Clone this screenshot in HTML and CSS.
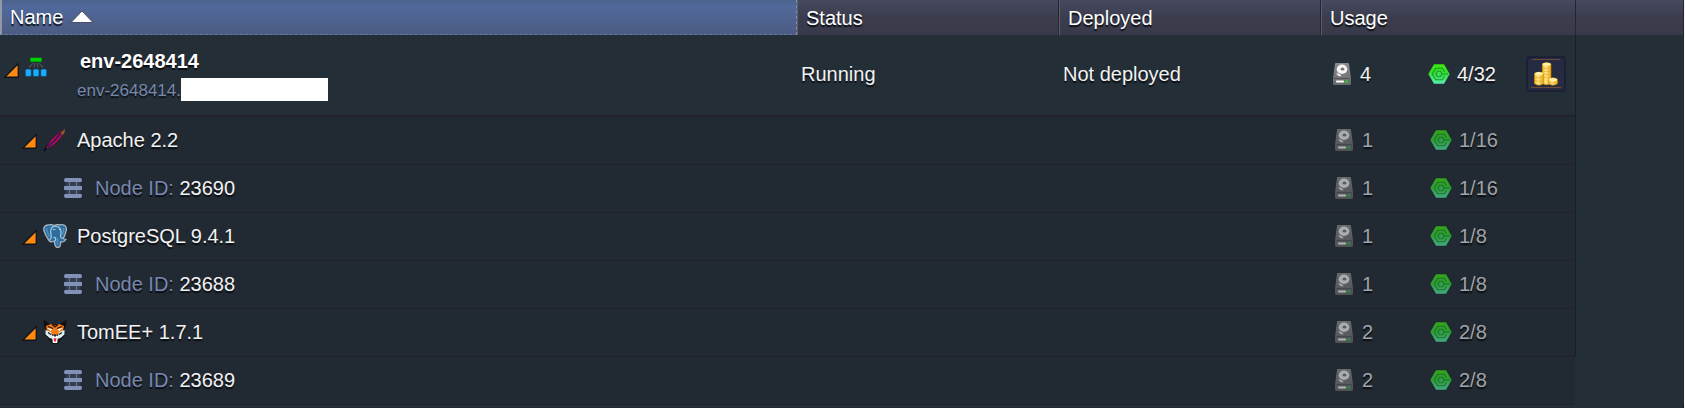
FILE: index.html
```html
<!DOCTYPE html>
<html lang="en">
<head>
<meta charset="utf-8">
<title>Environments</title>
<link rel="stylesheet" href="styles.css">
</head>
<body>
<svg class="sprite" width="0" height="0" aria-hidden="true">
  <defs>
    <linearGradient id="hexFill" x1="0" y1="0" x2="0" y2="1"><stop offset="0" stop-color="#3de80c"/><stop offset=".45" stop-color="#35dc2c"/><stop offset="1" stop-color="#58eeb4"/></linearGradient>
    <linearGradient id="diskBody" x1="0" y1="0" x2="0" y2="1"><stop offset="0" stop-color="#8c8c8e"/><stop offset="1" stop-color="#68686b"/></linearGradient>
    <linearGradient id="gold" x1="0" y1="0" x2="1" y2="0"><stop offset="0" stop-color="#f5b921"/><stop offset=".4" stop-color="#ffe98a"/><stop offset="1" stop-color="#e9a10d"/></linearGradient>
    <symbol id="toggle" viewBox="0 0 16 16"><path d="M15.200 .8V15.200H.8Z" fill="#ff8a0c" stroke="#10131f" stroke-width="1.400" stroke-linejoin="round"/></symbol>
    <symbol id="disk" viewBox="0 0 18 22">
      <path d="M2 1Q2 0 3 0H15Q16 0 16 1L18 15V20.500Q18 22 16.500 22H1.500Q0 22 0 20.500V15Z" fill="url(#diskBody)"/>
      <path d="M.5 15.500H17.500" stroke="#55565a"/>
      <ellipse cx="9" cy="6.200" rx="5.300" ry="4.700" fill="#f4f4f4"/>
      <ellipse cx="9.500" cy="6" rx="2" ry="1.500" fill="#77777a"/>
      <path d="M3 9.500Q8 10 9 13.500H6Q3 12 3 9.500Z" fill="#f4f4f4" stroke="#77777a" stroke-width=".7"/>
      <rect x="3" y="17.500" width="8" height="2" rx=".7" fill="#fff"/>
      <rect x="12" y="17.500" width="3.200" height="2" rx=".6" fill="#18d52c"/>
    </symbol>
    <symbol id="cloudlet" viewBox="0 0 22 20">
      <path d="M6 .3H16L21.700 10L16 19.700H6L.3 10Z" fill="url(#hexFill)"/>
      <path d="M16.500 7.800L14.300 4.200H7.700L4.300 10L7.700 15.800H14.300L16.500 12.200M14 10H20" fill="none" stroke="#159a2c" stroke-width="1.100"/>
      <path d="M9.500 7.300H12.500L14 10L12.500 12.700H9.500L8 10Z" fill="#3fdc58" stroke="#159a2c" stroke-width="1.100"/>
    </symbol>
    <symbol id="node" viewBox="0 0 18 20">
      <path d="M1.500 3H16.500V17H1.500Z" fill="#343e50"/>
      <path d="M5.500 4V16M12.500 4V16" stroke="#64728f" stroke-width="1.200"/>
      <g fill="#8092b7"><path d="M2 0H16Q18 0 18 2V3L17 4H1L0 3V2Q0 0 2 0Z"/><rect y="8" width="18" height="4" rx=".5"/><path d="M1 16H17L18 17V18Q18 20 16 20H2Q0 20 0 18V17Z"/></g>
    </symbol>
    <symbol id="topology" viewBox="0 0 22 20">
      <path d="M8 6L4 10.500M10 6L9 10.500M12 6L13 10.500M14 6L18 10.500" stroke="#4b5054" stroke-width="1.300"/>
      <rect x="5" y=".5" width="12" height="4.500" rx="1" fill="#00d000" stroke="#123c22" stroke-width=".6"/>
      <g fill="#16adff" stroke="#12395d" stroke-width=".6"><rect x=".3" y="12" width="6" height="7.500" rx="1.500"/><rect x="8" y="12" width="6" height="7.500" rx="1.500"/><rect x="15.700" y="12" width="6" height="7.500" rx="1.500"/></g>
    </symbol>
    <symbol id="apache" viewBox="0 0 24 24">
      <path d="M1 23L5 17" stroke="#0b0d1c" stroke-width="2"/>
      <path d="M3.500 19.500Q6 13 12 8Q17 3 21 2Q21 7 16 12Q11 18 4.500 20.500Z" fill="#c4103f" stroke="#3a1035" stroke-width=".8"/>
      <path d="M5 18.500Q12 13 18 5" fill="none" stroke="#45146b" stroke-width="2.200"/>
      <path d="M18 5L22 .5L21.500 5L19.500 7Z" fill="#806323"/>
    </symbol>
    <symbol id="postgres" viewBox="0 0 24 24">
      <path d="M5 1Q8 0 11 1.500Q14 .2 17 .8Q24 0 23.300 6Q22 12 20 14.500L23 15.500Q21 18.500 17.500 18Q18 23.500 14.500 23.500Q11.500 23 11.500 17Q8 19 6 16.500Q2 11 .8 6Q.4 1.500 5 1Z" fill="#2f6c9e" stroke="#a5b3bb" stroke-width="1.300"/>
      <path d="M9.500 3Q7 5 8 11Q9 15 6.500 15.500M15 2.500Q18.500 5 18 10Q16.500 13.500 19.500 14.500M10 5.500H12.500M16 5.500H18M12.500 17Q13.500 13 10.500 13.500M9.500 3Q12 1.500 14.500 3" fill="none" stroke="#a9cbdf" stroke-width="1.200"/>
      <path d="M3.500 4Q4 9 6.500 13M20.500 4Q21 7 19.500 10.500M14.500 14V21" fill="none" stroke="#4c8ec2" stroke-width="1.500"/>
    </symbol>
    <symbol id="tomee" viewBox="0 0 24 24">
      <path d="M.8 0L7 4H17L23.200 0Q24 5 21.500 9L22.500 15L18 19.500L14.500 24H9.500L6 19.500L1.500 15L2.500 9Q0 5 .8 0Z" fill="#101114"/>
      <path d="M3 6L8 4L12 5.500L16 4L21 6L20 11L12 16L4 11Z" fill="#f47b16"/>
      <path d="M2.500 10L8 12L10 19L6.500 18L2.500 14.500ZM21.500 10L16 12L14 19L17.500 18L21.500 14.500Z" fill="#d8eff5"/>
      <path d="M4 8L9.500 9L8 11ZM20 8L14.500 9L16 11Z" fill="#fff"/>
      <path d="M9 4.500L12 7L15 4.500M5 6.500L10 8.500M19 6.500L14 8.500M5 12.500L8 14.500M19 12.500L16 14.500" fill="none" stroke="#2b1410" stroke-width="1.200"/>
      <path d="M9 16L12 14.500L15 16L14.200 23H9.800Z" fill="#fff"/>
      <path d="M10 15L12 14L14 15L12 17Z" fill="#24252a"/>
      <path d="M10.500 18.300H13.500L13 21.500H11Z" fill="#e72836"/>
    </symbol>
    <symbol id="coins" viewBox="0 0 24 24">
      <g fill="url(#gold)" stroke="#d08a0c" stroke-width=".5"><path d="M8.300 1.800Q12.700-1 17 1.800V21.500Q12.700 24 8.300 21.500Z"/><path d="M.4 11.500Q5 8.500 9.600 11.500V21.500Q5 25 .4 21.500Z"/><path d="M14.500 17.500Q19 14 23.600 17.500V21.500Q19 25 14.500 21.500Z"/></g>
      <ellipse cx="12.600" cy="2.200" rx="4" ry="1.500" fill="#fff2a7"/><ellipse cx="5" cy="11.600" rx="4.200" ry="1.700" fill="#fff2a7"/><ellipse cx="19" cy="17.500" rx="4.100" ry="1.600" fill="#fff2a7"/>
      <path d="M9 6Q12.500 7.500 16.300 6M9 9Q12.500 10.500 16.300 9M10 12Q12.500 13.500 16.300 12M10 15Q12.500 16.500 16 15M1 15Q5 17 9 15M1 18.500Q5 20.500 9 18.500M15 20.500Q19 22 23 20.500" fill="none" stroke="#e8ac2c" stroke-width=".7"/>
    </symbol>
  </defs>
</svg>
<main class="panel">
<table class="grid">
  <colgroup><col><col class="col-status"><col class="col-deployed"><col class="col-usage"><col class="col-rest"></colgroup>
  <thead>
    <tr>
      <th class="sorted" scope="col" aria-sort="ascending"><button class="sort" type="button">Name<svg class="arrow" viewBox="0 0 24 14" aria-hidden="true"><path d="M12 1L23 12.500H1Z" fill="#fff" stroke="#4b4e5e" stroke-width="1" stroke-linejoin="round"/></svg></button></th>
      <th scope="col">Status</th><th scope="col">Deployed</th><th scope="col">Usage</th><td></td>
    </tr>
  </thead>
  <tbody>
    <tr class="env">
      <td><div class="tree">
        <button class="toggle" type="button" aria-label="Collapse env-2648414"><svg viewBox="0 0 16 16"><use href="#toggle"/></svg></button>
        <svg class="topology" viewBox="0 0 22 20"><use href="#topology"/></svg>
        <div class="names"><strong>env-2648414</strong><div class="domain">env-2648414.<span class="mask"></span></div></div>
      </div></td>
      <td>Running</td><td>Not deployed</td>
      <td><div class="usage"><svg class="disk"><use href="#disk"/></svg><span class="count">4</span><svg class="cloudlet"><use href="#cloudlet"/></svg><span class="limit">4/32</span><button class="billing" type="button" aria-label="Billing history"><svg viewBox="0 0 24 24"><use href="#coins"/></svg></button></div></td>
      <td class="rest"></td>
    </tr>
    <tr>
      <td><div class="tree group"><button class="toggle" type="button" aria-label="Collapse Apache"><svg viewBox="0 0 16 16"><use href="#toggle"/></svg></button><svg class="logo"><use href="#apache"/></svg><span>Apache 2.2</span></div></td>
      <td></td><td></td>
      <td><div class="usage dim"><svg class="disk"><use href="#disk"/></svg><span class="count">1</span><svg class="cloudlet"><use href="#cloudlet"/></svg><span class="limit">1/16</span></div></td>
      <td class="rest"></td>
    </tr>
    <tr>
      <td><div class="tree leaf"><svg class="node"><use href="#node"/></svg><span><span class="label">Node ID:</span> 23690</span></div></td>
      <td></td><td></td>
      <td><div class="usage dim"><svg class="disk"><use href="#disk"/></svg><span class="count">1</span><svg class="cloudlet"><use href="#cloudlet"/></svg><span class="limit">1/16</span></div></td>
      <td class="rest"></td>
    </tr>
    <tr>
      <td><div class="tree group"><button class="toggle" type="button" aria-label="Collapse PostgreSQL"><svg viewBox="0 0 16 16"><use href="#toggle"/></svg></button><svg class="logo"><use href="#postgres"/></svg><span>PostgreSQL 9.4.1</span></div></td>
      <td></td><td></td>
      <td><div class="usage dim"><svg class="disk"><use href="#disk"/></svg><span class="count">1</span><svg class="cloudlet"><use href="#cloudlet"/></svg><span class="limit">1/8</span></div></td>
      <td class="rest"></td>
    </tr>
    <tr>
      <td><div class="tree leaf"><svg class="node"><use href="#node"/></svg><span><span class="label">Node ID:</span> 23688</span></div></td>
      <td></td><td></td>
      <td><div class="usage dim"><svg class="disk"><use href="#disk"/></svg><span class="count">1</span><svg class="cloudlet"><use href="#cloudlet"/></svg><span class="limit">1/8</span></div></td>
      <td class="rest"></td>
    </tr>
    <tr>
      <td><div class="tree group"><button class="toggle" type="button" aria-label="Collapse TomEE+"><svg viewBox="0 0 16 16"><use href="#toggle"/></svg></button><svg class="logo"><use href="#tomee"/></svg><span>TomEE+ 1.7.1</span></div></td>
      <td></td><td></td>
      <td><div class="usage dim"><svg class="disk"><use href="#disk"/></svg><span class="count">2</span><svg class="cloudlet"><use href="#cloudlet"/></svg><span class="limit">2/8</span></div></td>
      <td class="rest"></td>
    </tr>
    <tr>
      <td><div class="tree leaf"><svg class="node"><use href="#node"/></svg><span><span class="label">Node ID:</span> 23689</span></div></td>
      <td></td><td></td>
      <td><div class="usage dim"><svg class="disk"><use href="#disk"/></svg><span class="count">2</span><svg class="cloudlet"><use href="#cloudlet"/></svg><span class="limit">2/8</span></div></td>
      <td class="rest"></td>
    </tr>
  </tbody>
</table>
</main>
</body>
</html>
```

FILE: styles.css
```css
* { box-sizing: border-box; }
body {
  margin: 0;
  background: #242e37;
  color: #f2f2f2;
  font: 20px/24px "Liberation Sans", Arial, sans-serif;
  text-shadow: 0 2px 1px #0b0e12;
}
button { font: inherit; color: inherit; text-shadow: inherit; border: 0; padding: 0; background: none; cursor: pointer; }
svg { display: block; flex: none; }
.sprite { position: absolute; }
.panel { min-height: 100vh; border-right: 1px solid #f4f4f4; box-shadow: inset -1px 0 #14181e; }
.grid { width: 100%; table-layout: fixed; border-collapse: separate; border-spacing: 0; }
.col-status { width: 262px; }
.col-deployed { width: 262px; }
.col-usage { width: 254px; }
.col-rest { width: 109px; }

thead th, thead td {
  height: 35px;
  padding: 0 0 0 8px;
  text-align: left;
  font-weight: 400;
  color: #fff;
  background: linear-gradient(#464a60, #3b3c4d 50%, #383949);
  border-left: 1px solid #5b5c6c;
  border-right: 1px solid #24252f;
}
thead th:nth-child(4) { border-right: 0; }
thead td { border-left: 1px solid #24252f; }
thead .sorted {
  background: linear-gradient(#4b628c, #50699b 20%, #4c5b82);
  border-left: 2px solid #9298a8;
  border-right: 1px dashed #7f8ca8;
  border-bottom: 1px dashed #6477a0;
}
.sort { display: flex; align-items: center; gap: 7px; }
.arrow { width: 24px; height: 14px; }

tbody td {
  height: 48px;
  padding: 0 0 2px 4px;
  background: #212932;
  border-bottom: 1px solid #222224;
}
.env td { height: 82px; background: #242e37; border-bottom: 2px solid #21252a; }
tbody .rest, .env .rest { background: #242e37; border-bottom: 0; border-left: 1px solid #1a1e26; }
tbody tr:last-child .rest { border-left-color: #242e37; }

.tree { display: flex; align-items: center; }
.toggle svg { width: 15px; height: 15px; }
.env .toggle { margin: 0 6px 8px 0; }
.topology { width: 22px; height: 20px; margin-bottom: 14px; }
.names { display: flex; flex-direction: column; padding: 6px 0 0 30px; line-height: 28px; }
.names strong { padding-left: 3px; color: #fff; }
.domain { display: flex; align-items: center; font-size: 17px; line-height: 32px; color: #7788ad; }
.mask { width: 147px; height: 23px; margin-bottom: 4px; background: #fff; }
.group { padding-left: 18px; }
.group .toggle { margin: 4px 6px 0 0; }
.logo { width: 24px; height: 24px; margin-right: 10px; }
.leaf { padding-left: 60px; gap: 13px; }
.node { width: 18px; height: 20px; }
.label { color: #7788ad; }

.usage { display: flex; align-items: center; padding-left: 8px; }
.disk { width: 18px; height: 22px; margin-right: 9px; }
.count { width: 68px; }
.cloudlet { width: 22px; height: 20px; margin-right: 7px; }
.limit { width: 69px; }
.dim { padding-left: 10px; color: #a0a3a7; }
.dim svg { opacity: .65; }
.billing {
  display: grid;
  place-items: center;
  width: 40px;
  height: 36px;
  border: 2px solid #1c2036;
  border-radius: 4px;
  background: linear-gradient(#6d4b38, #6d4b38) 50% 1px / 28px 1px no-repeat, linear-gradient(#6d4b38, #6d4b38) 50% 29px / 30px 1px no-repeat, linear-gradient(#232a42, #292c40);
}
.billing svg { width: 24px; height: 24px; }
```
